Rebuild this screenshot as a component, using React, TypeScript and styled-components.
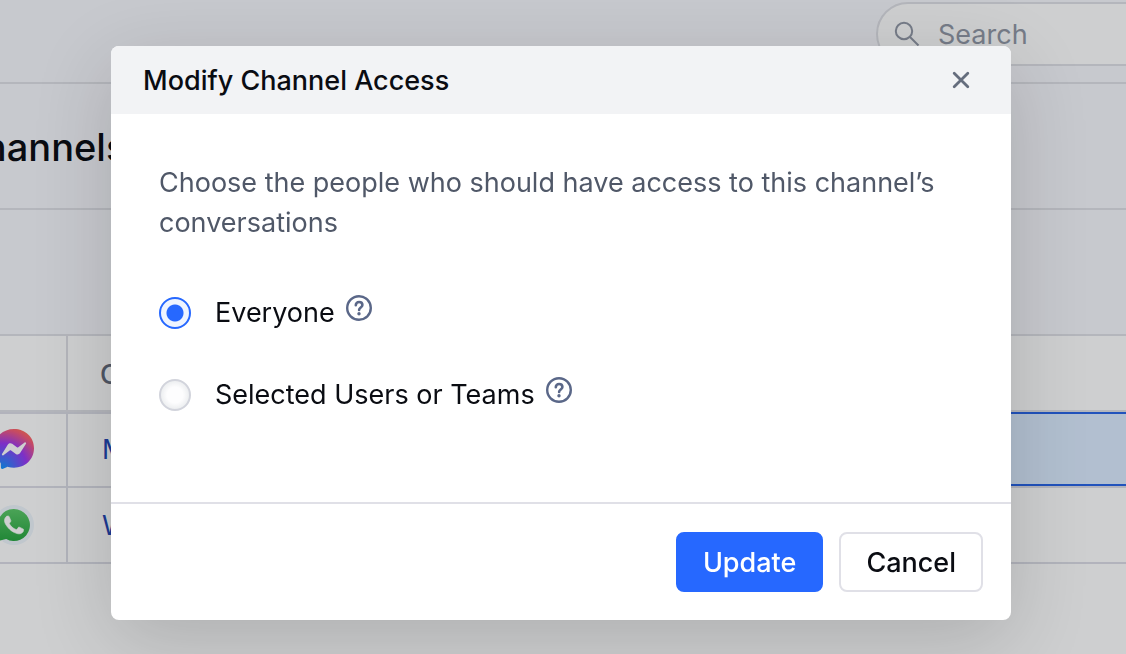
import React from 'react';
import styled, { createGlobalStyle } from 'styled-components';

const GlobalStyle = createGlobalStyle`
  *, *::before, *::after { box-sizing: border-box; }
  html, body { height: 100%; }
  body {
    margin: 0;
    overflow: hidden;
    background: #fff;
    color: #0a0c12;
    font-family: Inter, "Liberation Sans", sans-serif;
    font-size: 27px;
    line-height: 40px;
  }
  button, input { font: inherit; }
  h1, h2, p { margin: 0; }
`;

const Shell = styled.div`
  margin-left: -48px;
  overflow: hidden;
`;

const Bar = styled.header`
  display: flex;
  justify-content: flex-end;
  height: 84px;
  padding-top: 2px;
  background: #f7f8fd;
  border-bottom: 2px solid #dfe0e6;
`;

const SearchBox = styled.label`
  display: flex;
  align-items: center;
  gap: 18px;
  flex: none;
  width: 360px;
  height: 64px;
  margin-right: -110px;
  padding: 0 16px;
  background: #fff;
  border: 2px solid #dfe0e6;
  border-radius: 32px;
  color: #9298a6;
`;

const SearchInput = styled.input`
  flex: 1;
  min-width: 0;
  padding: 2px 0 0;
  border: 0;
  outline: 0;
  background: none;
  &::placeholder { color: #9298a6; opacity: 1; }
`;

const TitleBar = styled.div`
  display: flex;
  align-items: center;
  height: 126px;
  padding: 2px 0 0 4px;
  background: #f7f8fd;
  border-bottom: 2px solid #dfe0e6;
`;

const PageTitle = styled.h1`
  font-size: 38px;
  font-weight: 500;
  line-height: 48px;
`;

const Toolbar = styled.div`
  height: 126px;
  background: #f7f8fd;
  border-bottom: 2px solid #dfe0e6;
`;

const Table = styled.table`
  width: 100%;
  table-layout: fixed;
  border-collapse: separate;
  border-spacing: 0;
  text-align: left;
`;

const HeadCell = styled.th<{ $w?: string; $divided?: boolean }>`
  width: ${p => p.$w ?? 'auto'};
  height: 76px;
  padding: 4px 32px 0;
  border-bottom: 2px solid #dfe0e6;
  border-right: ${p => (p.$divided ? '2px solid #dfe0e6' : '0')};
  color: #626a7a;
  font-weight: 500;
`;

const Cell = styled.td<{ $divided?: boolean; $active?: boolean; $topped?: boolean }>`
  height: 76px;
  padding: 2px 34px 0;
  border-bottom: 2px solid #dcdde6;
  border-right: ${p => (p.$divided ? '2px solid #dcdde6' : '0')};
  background: ${p => (p.$active ? '#dcecff' : '#fff')};
  box-shadow: ${p =>
    p.$active
      ? 'inset 0 2px #2864e6, inset 0 -2px #2864e6'
      : p.$topped
        ? 'inset 0 2px #dcdde6'
        : 'none'};
`;

const ChannelLink = styled.a`
  color: #2346b4;
  text-decoration: none;
`;

const BrandIcon = styled.svg`
  display: block;
  width: 44px;
  height: 44px;
  margin-left: 6px;
`;

const Overlay = styled.div`
  position: fixed;
  inset: 0;
  display: flex;
  justify-content: center;
  align-items: flex-start;
  padding: 46px 68px 34px 64px;
  background: rgba(8, 14, 20, 0.2);
`;

const Dialog = styled.section`
  display: flex;
  flex-direction: column;
  width: 100%;
  max-width: 900px;
  background: #fff;
  border-radius: 8px;
  box-shadow: 0 20px 80px rgba(0, 0, 0, 0.16);
`;

const DialogHeader = styled.div`
  display: flex;
  align-items: center;
  justify-content: space-between;
  height: 68px;
  padding: 0 40px 0 32px;
  background: #f2f3f5;
  border-radius: 8px 8px 0 0;
`;

const DialogTitle = styled.h2`
  padding-top: 2px;
  font-size: 27px;
  font-weight: 500;
`;

const CloseButton = styled.button`
  display: flex;
  padding: 0;
  border: 0;
  background: none;
  color: #656d7d;
`;

const DialogBody = styled.div`
  padding: 49px 48px 87px;
`;

const Prompt = styled.p`
  margin-bottom: 50px;
  color: #505868;
`;

const Options = styled.fieldset`
  display: flex;
  flex-direction: column;
  gap: 42px;
  margin: 0;
  padding: 0;
  border: 0;
`;

const Option = styled.div`
  display: flex;
  align-items: center;
`;

const Radio = styled.input`
  appearance: none;
  width: 32px;
  height: 32px;
  margin: 0 24px 0 0;
  border: 2px solid #d2d4dc;
  border-radius: 50%;
  background: radial-gradient(circle, #fdfdfe 40%, #eceef0 72%);
  &:checked {
    border-color: #2668ff;
    background: radial-gradient(circle, #2668ff 8px, #eef4ff 9px);
  }
`;

const HelpButton = styled.button`
  display: flex;
  margin: 0 0 10px 11px;
  padding: 0;
  border: 0;
  background: none;
  color: #5a6788;
`;

const DialogFooter = styled.div`
  display: flex;
  justify-content: flex-end;
  gap: 16px;
  padding: 28px;
  border-top: 2px solid #e0e0e7;
`;

const Button = styled.button<{ $primary?: boolean }>`
  height: 60px;
  padding: 2px 25px 0;
  border: 2px solid ${p => (p.$primary ? '#2668ff' : '#e0e0e7')};
  border-radius: 8px;
  background: ${p => (p.$primary ? '#2668ff' : '#fff')};
  color: ${p => (p.$primary ? '#fff' : '#0a0c12')};
  font-weight: 500;
`;

const SearchIcon = () => (
  <svg width="26" height="26" viewBox="0 0 26 26" fill="none" stroke="currentColor" strokeWidth="2" aria-hidden="true">
    <circle cx="10" cy="10" r="8.2" />
    <path d="M16 16l8.5 8.5" />
  </svg>
);

const CloseIcon = () => (
  <svg width="20" height="20" viewBox="0 0 20 20" fill="none" stroke="currentColor" strokeWidth="2.8" strokeLinecap="round" aria-hidden="true">
    <path d="M3.2 3.2l13.6 13.6M16.8 3.2L3.2 16.8" />
  </svg>
);

const HelpIcon = () => (
  <svg width="26" height="26" viewBox="0 0 26 26" fill="none" stroke="currentColor" strokeLinecap="round" strokeLinejoin="round" aria-hidden="true">
    <circle cx="13" cy="13" r="11.8" strokeWidth="2.4" />
    <path d="M9.8 10.2c0-1.9 1.4-3.2 3.3-3.2s3.3 1.3 3.3 3.1c0 2.4-3.3 2.5-3.3 4.9" strokeWidth="2.6" />
    <circle cx="13" cy="18.8" r="1.7" fill="currentColor" stroke="none" />
  </svg>
);

const MessengerIcon = () => (
  <BrandIcon viewBox="0 0 44 44" role="img" aria-label="Messenger">
    <defs>
      <radialGradient id="messenger" cx="0.2" cy="1" r="1.1">
        <stop offset="0" stopColor="#0c96ff" />
        <stop offset="0.58" stopColor="#9a38f4" />
        <stop offset="0.9" stopColor="#f55a78" />
        <stop offset="1" stopColor="#ff6a5a" />
      </radialGradient>
    </defs>
    <path fill="url(#messenger)" d="M22 1C10.8 1 2 9.2 2 20.300c0 5.800 2.400 10.800 6.300 14.300.3.3.5.7.5 1.200l.1 3.600c0 1.100 1.200 1.900 2.200 1.400l4-1.800c.3-.1.7-.2 1.100-.1 1.800.5 3.800.8 5.800.8 11.200 0 20-8.200 20-19.400S33.200 1 22 1z" />
    <path fill="#fff" d="M10 25.900l5.900-9.300c.9-1.500 2.900-1.900 4.300-.8l4.700 3.500c.4.3 1 .3 1.400 0l6.300-4.800c.8-.6 1.900.4 1.400 1.300l-5.900 9.300c-.9 1.500-2.900 1.900-4.300.8l-4.700-3.500c-.4-.3-1-.3-1.400 0l-6.300 4.800c-.8.6-1.900-.4-1.400-1.300z" />
  </BrandIcon>
);

const WhatsAppIcon = () => (
  <BrandIcon viewBox="0 0 44 44" role="img" aria-label="WhatsApp">
    <defs>
      <linearGradient id="whatsapp" x1="0" y1="0" x2="0" y2="1">
        <stop offset="0" stopColor="#5bc968" />
        <stop offset="1" stopColor="#27a53f" />
      </linearGradient>
    </defs>
    <circle cx="22" cy="21" r="20" fill="#eef5fc" />
    <path fill="url(#whatsapp)" d="M22 5a16 16 0 1 1-7.800 30L5.500 37.200l2.300-8.300A16 16 0 0 1 22 5z" />
    <path
      fill="#fff"
      stroke="#fff"
      strokeWidth="0.4"
      transform="translate(3 2) scale(1.58)"
      d="M17.472 14.382c-.297-.149-1.758-.867-2.03-.967-.273-.099-.471-.148-.67.15-.197.297-.767.966-.94 1.164-.173.199-.347.223-.644.075-.297-.15-1.255-.463-2.39-1.475-.883-.788-1.48-1.761-1.653-2.059-.173-.297-.018-.458.13-.606.134-.133.298-.347.446-.52.149-.174.198-.298.298-.497.099-.198.05-.371-.025-.52-.075-.149-.669-1.612-.916-2.207-.242-.579-.487-.5-.669-.51-.173-.008-.371-.01-.57-.01-.198 0-.52.074-.792.372-.272.297-1.04 1.016-1.04 2.479 0 1.462 1.065 2.875 1.213 3.074.149.198 2.096 3.2 5.077 4.487.709.306 1.262.489 1.694.625.712.227 1.36.195 1.871.118.571-.085 1.758-.719 2.006-1.413.248-.694.248-1.289.173-1.413-.074-.124-.272-.198-.57-.347z"
    />
  </BrandIcon>
);

export default function App() {
  return (
    <>
      <GlobalStyle />
      <Shell>
        <Bar>
          <SearchBox>
            <SearchIcon />
            <SearchInput type="search" placeholder="Search" aria-label="Search" />
          </SearchBox>
        </Bar>
        <TitleBar>
          <PageTitle>Channels</PageTitle>
        </TitleBar>
        <Toolbar />
        <Table>
          <thead>
            <tr>
              <HeadCell $w="116px" $divided aria-label="Type" />
              <HeadCell $w="500px">Channel</HeadCell>
              <HeadCell aria-label="Access" />
            </tr>
          </thead>
          <tbody>
            <tr>
              <Cell $divided $topped><MessengerIcon /></Cell>
              <Cell $topped><ChannelLink href="#messenger">Messenger</ChannelLink></Cell>
              <Cell $active />
            </tr>
            <tr>
              <Cell $divided><WhatsAppIcon /></Cell>
              <Cell><ChannelLink href="#whatsapp">WhatsApp</ChannelLink></Cell>
              <Cell />
            </tr>
          </tbody>
        </Table>
      </Shell>
      <Overlay>
        <Dialog role="dialog" aria-modal="true" aria-labelledby="dialog-title">
          <DialogHeader>
            <DialogTitle id="dialog-title">Modify Channel Access</DialogTitle>
            <CloseButton type="button" aria-label="Close"><CloseIcon /></CloseButton>
          </DialogHeader>
          <DialogBody>
            <Prompt id="prompt">
              Choose the people who should have access to this channel’s conversations
            </Prompt>
            <Options aria-labelledby="prompt">
              <Option>
                <Radio type="radio" name="access" id="everyone" defaultChecked />
                <label htmlFor="everyone">Everyone</label>
                <HelpButton type="button" aria-label="About everyone"><HelpIcon /></HelpButton>
              </Option>
              <Option>
                <Radio type="radio" name="access" id="selected" />
                <label htmlFor="selected">Selected Users or Teams</label>
                <HelpButton type="button" aria-label="About selected users or teams"><HelpIcon /></HelpButton>
              </Option>
            </Options>
          </DialogBody>
          <DialogFooter>
            <Button type="button" $primary>Update</Button>
            <Button type="button">Cancel</Button>
          </DialogFooter>
        </Dialog>
      </Overlay>
    </>
  );
}
